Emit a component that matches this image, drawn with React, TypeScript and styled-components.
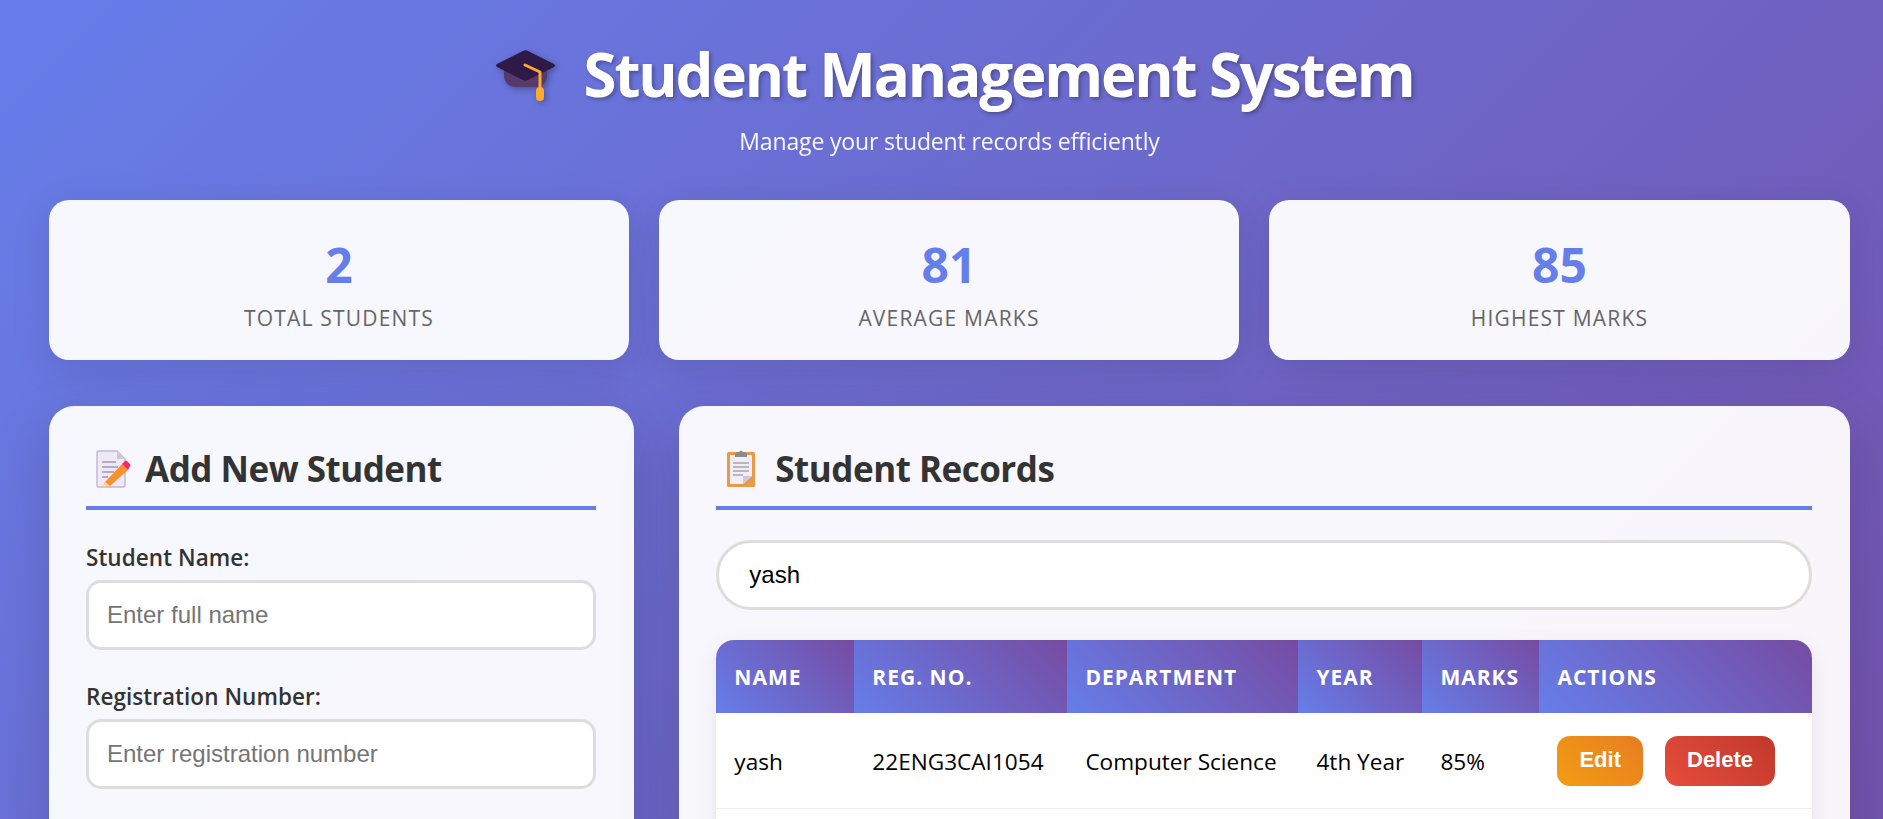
import React from 'react';
import styled, { createGlobalStyle } from 'styled-components';

const GlobalStyle = createGlobalStyle`
  * { box-sizing: border-box; }
  html, body { margin: 0; height: 100%; overflow: hidden; }
  body {
    font-family: "Open Sans", "Noto Sans", sans-serif;
    background: linear-gradient(135deg, #667eea 0%, #764ba2 100%) no-repeat;
    background-size: 1899px 1300px;
  }
`;

const Page = styled.div`
  width: 1899px;
  height: 819px;
  overflow: hidden;
  padding: 0 49px;
`;

const Header = styled.header`
  height: 200px;
  padding-top: 34px;
  color: #fff;
  text-align: center;
`;

const Title = styled.h1`
  margin: 0;
  height: 80px;
  padding-left: 10px;
  display: flex;
  align-items: center;
  justify-content: center;
  gap: 28px;
  font-size: 60px;
  line-height: 80px;
  font-weight: 700;
  letter-spacing: -2.15px;
  text-shadow: 2px 2px 4px rgba(0, 0, 0, 0.3);
`;

const CapIcon = styled.svg`
  width: 60px;
  height: 60px;
  filter: drop-shadow(2px 2px 3px rgba(0, 0, 0, 0.3));
`;

const Subtitle = styled.p`
  margin: 12px 0 0;
  font-size: 23px;
  line-height: 30px;
  letter-spacing: -0.15px;
  color: #fff;
  opacity: 0.95;
`;

const Stats = styled.section`
  display: grid;
  grid-template-columns: 580px 580px 1fr;
  gap: 30px;
`;

const StatCard = styled.div`
  height: 160px;
  padding-top: 37px;
  border-radius: 20px;
  background: rgba(255, 255, 255, 0.95);
  box-shadow: 0 10px 40px rgba(0, 0, 0, 0.1);
  text-align: center;
`;

const StatValue = styled.div`
  font-size: 48px;
  line-height: 56px;
  font-weight: 700;
  color: #667eea;
`;

const StatLabel = styled.div`
  margin-top: 11px;
  font-size: 21px;
  line-height: 28px;
  letter-spacing: 1.2px;
  text-transform: uppercase;
  color: #666;
`;

const Columns = styled.section`
  margin-top: 46px;
  display: grid;
  grid-template-columns: 1fr 2fr;
  gap: 45px;
`;

const Panel = styled.div`
  height: 600px;
  padding: 37px 38.5px 37px 37px;
  border-radius: 25px;
  background: rgba(255, 255, 255, 0.95);
  box-shadow: 0 20px 60px rgba(0, 0, 0, 0.15);
`;

const PanelTitle = styled.h2`
  margin: 0 0 30px;
  height: 67px;
  padding: 0 0 12px 10px;
  display: flex;
  align-items: center;
  gap: 12px;
  border-bottom: 4px solid #667eea;
  font-size: 35px;
  line-height: 46px;
  font-weight: 700;
  letter-spacing: -0.5px;
  color: #333;
`;

const EmojiIcon = styled.svg`
  width: 37px;
  height: 42px;
  margin-top: 3px;
  flex: none;
`;

const Field = styled.div`
  margin-bottom: 29px;
`;

const Label = styled.label`
  display: block;
  margin-bottom: 4px;
  font-size: 22.5px;
  line-height: 36px;
  font-weight: 600;
  letter-spacing: 0.05px;
  color: #333;
`;

const TextInput = styled.input`
  display: block;
  width: 100%;
  height: 70px;
  padding: 0 18px;
  border: 3px solid #ddd;
  border-radius: 15px;
  background: #fff;
  font-family: "Liberation Sans", Arial, sans-serif;
  font-size: 24px;
  color: #000;
  outline: none;

  &::placeholder {
    color: #757575;
  }
`;

const SearchInput = styled(TextInput)`
  height: 70px;
  padding: 0 30px;
  border-radius: 35px;
`;

const TableWrap = styled.div`
  margin-top: 30px;
  height: 300px;
  border-radius: 18px 18px 0 0;
  overflow: hidden;
  box-shadow: 0 6px 20px rgba(0, 0, 0, 0.08);
  background: #fff;
`;

const Table = styled.table`
  width: 100%;
  table-layout: fixed;
  border-collapse: collapse;
`;

const HeadCell = styled.th`
  height: 73px;
  padding: 0 18px;
  background: linear-gradient(45deg, #667eea 0%, #764ba2 100%);
  font-size: 21px;
  font-weight: 700;
  letter-spacing: 1px;
  text-align: left;
  text-transform: uppercase;
  color: #fff;
`;

const Cell = styled.td`
  height: 95px;
  padding: 2px 18px 0;
  border-bottom: 1px solid #eee;
  font-size: 22.6px;
  color: #000;
  white-space: nowrap;
`;

const Actions = styled.div`
  display: flex;
  gap: 22px;
`;

const ActionButton = styled.button<{ $danger?: boolean }>`
  height: 50px;
  padding: 0 22px 3px;
  border: 0;
  border-radius: 13px;
  background: ${(p) => (p.$danger
    ? 'linear-gradient(45deg, #e74c3c, #c0392b)'
    : 'linear-gradient(45deg, #f39c12, #e67e22)')};
  font-family: "Liberation Sans", Arial, sans-serif;
  font-size: 22px;
  font-weight: 700;
  color: #fff;
`;

const columns: [string, number][] = [
  ['Name', 138],
  ['Reg. No.', 213],
  ['Department', 231],
  ['Year', 124],
  ['Marks', 117],
  ['Actions', 272],
];

const stats = [
  { value: '2', label: 'Total Students' },
  { value: '81', label: 'Average Marks' },
  { value: '85', label: 'Highest Marks' },
];

function GraduationCap () {
  return (
    <CapIcon viewBox='0 0 60 60'>
      <path d='M8 24 L51 24 L51 33 C50 39 46 43 40 43 L20 43 C13 43 9 39 8 33 Z' fill='#553a6b' />
      <path d='M27 7 Q29.5 5.5 32 7 L58 20 Q60 21.5 58 23 L32 36 Q29.5 37.5 27 36 L1 23 Q-1 21.5 1 20 Z' fill='#2f1a47' />
      <path d='M29 21 L44 28 L44 46' fill='none' stroke='#fdaa2d' strokeWidth='3' strokeLinecap='round' strokeLinejoin='round' />
      <rect x='40' y='43' width='8' height='14' rx='4' fill='#fdaa2d' />
    </CapIcon>
  );
}

function MemoIcon () {
  return (
    <EmojiIcon viewBox='0 0 37 42'>
      <path d='M1 4 Q1 2 3 2 L21 2 L29 10 L29 36 Q29 38 27 38 L3 38 Q1 38 1 36 Z' fill='#efe9f6' stroke='#c3b6d0' strokeWidth='1.4' />
      <path d='M21 2 L29 10 L21 10 Z' fill='#cfc5dc' />
      <path d='M6 13 H20 M6 18 H22 M6 23 H18 M6 28 H12' stroke='#a592b6' strokeWidth='1.4' />
      <path d='M9 33 L26 15 L32 21 L14 37 L7 38 Z' fill='#f9902e' />
      <path d='M26 15 L29 12 Q30 11 31 12 L34 15 Q35 16 34 17 L32 21 Z' fill='#f8285f' />
      <path d='M7 38 L9 33 L14 37 Z' fill='#fbd8a8' />
    </EmojiIcon>
  );
}

function ClipboardIcon () {
  return (
    <EmojiIcon viewBox='0 0 37 42'>
      <rect x='1' y='3' width='28' height='35' rx='1.5' fill='#e99a45' />
      <path d='M4 6 H26 V27 L17 35 H4 Z' fill='#f1edf6' />
      <path d='M17 35 L26 27 H17 Z' fill='#cfc5dc' />
      <path d='M9 6 Q9 3 12 3 L13 3 Q15 0 17 3 L18 3 Q21 3 21 6 L21 8 L9 8 Z' fill='#8d8a8a' />
      <path d='M7 14 H23 M7 18 H23 M7 22 H23 M7 26 H17' stroke='#a9a3ad' strokeWidth='1.3' />
    </EmojiIcon>
  );
}

export default function App (): React.ReactElement {
  return (
    <Page>
      <GlobalStyle />
      <Header>
        <Title><GraduationCap />Student Management System</Title>
        <Subtitle>Manage your student records efficiently</Subtitle>
      </Header>
      <Stats>
        {stats.map((s) => (
          <StatCard key={s.label}>
            <StatValue>{s.value}</StatValue>
            <StatLabel>{s.label}</StatLabel>
          </StatCard>
        ))}
      </Stats>
      <Columns>
        <Panel>
          <PanelTitle><MemoIcon />Add New Student</PanelTitle>
          <Field>
            <Label>Student Name:</Label>
            <TextInput placeholder='Enter full name' />
          </Field>
          <Field>
            <Label>Registration Number:</Label>
            <TextInput placeholder='Enter registration number' />
          </Field>
        </Panel>
        <Panel>
          <PanelTitle><ClipboardIcon />Student Records</PanelTitle>
          <SearchInput defaultValue='yash' />
          <TableWrap>
            <Table>
              <colgroup>
                {columns.map(([name, width]) => <col key={name} style={{ width }} />)}
              </colgroup>
              <thead>
                <tr>{columns.map(([name]) => <HeadCell key={name}>{name}</HeadCell>)}</tr>
              </thead>
              <tbody>
                <tr>
                  <Cell>yash</Cell>
                  <Cell>22ENG3CAI1054</Cell>
                  <Cell>Computer Science</Cell>
                  <Cell>4th Year</Cell>
                  <Cell>85%</Cell>
                  <Cell>
                    <Actions>
                      <ActionButton>Edit</ActionButton>
                      <ActionButton $danger>Delete</ActionButton>
                    </Actions>
                  </Cell>
                </tr>
              </tbody>
            </Table>
          </TableWrap>
        </Panel>
      </Columns>
    </Page>
  );
}
